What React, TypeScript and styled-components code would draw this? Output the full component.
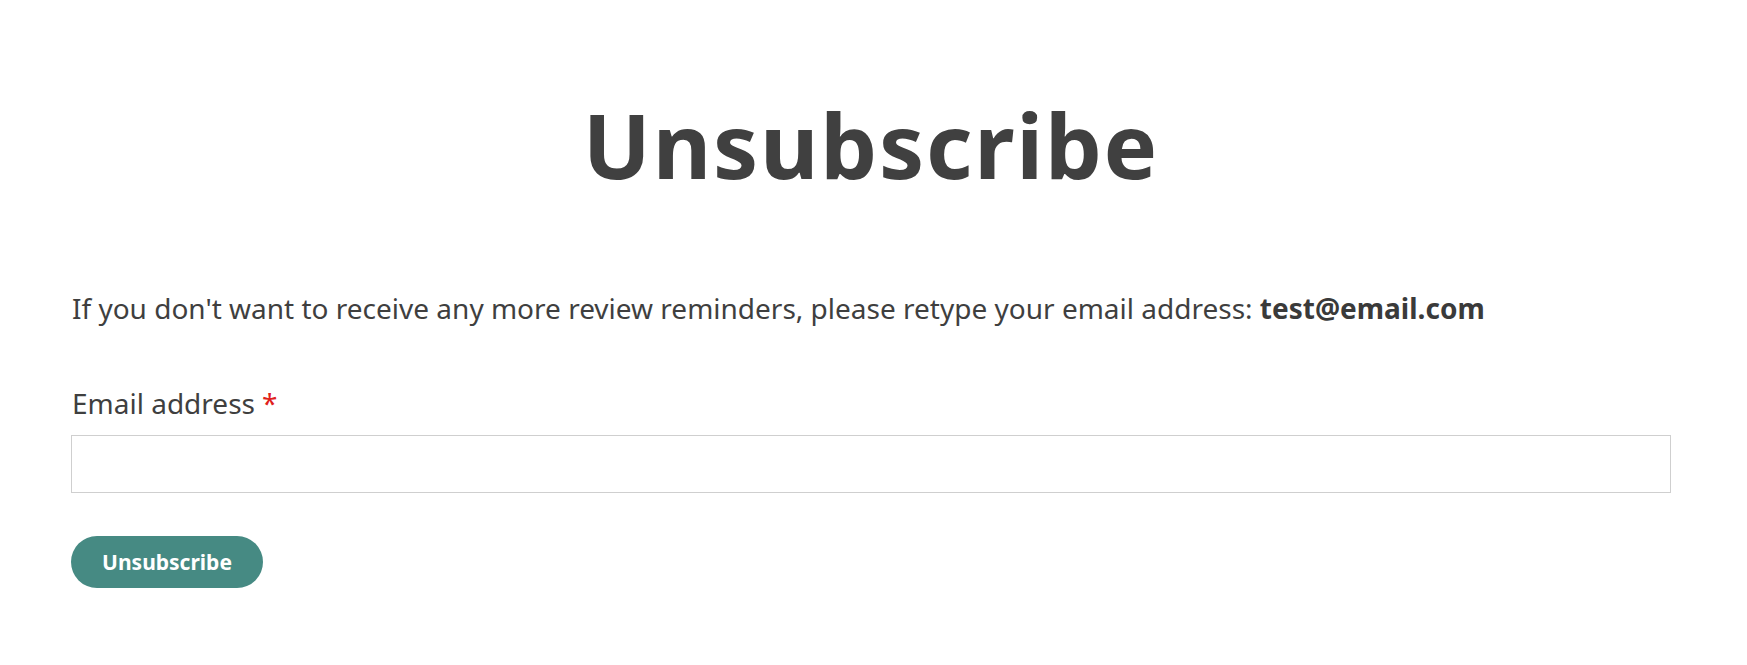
import React from "react";
import styled, { createGlobalStyle } from "styled-components";

const Global = createGlobalStyle`
  html, body {
    margin: 0;
    padding: 0;
    background: #ffffff;
  }
  body {
    font-family: "Noto Sans", "Open Sans", sans-serif;
    color: #3d3d3d;
  }
`;

const Page = styled.main`
  width: 1600px;
  padding: 90px 0 60px 71px;
  display: flex;
  flex-direction: column;
`;

const Title = styled.h1`
  margin: 0;
  font-size: 90px;
  line-height: 108px;
  font-weight: 700;
  letter-spacing: 1.8px;
  text-align: center;
  color: #404040;
`;

const Intro = styled.p`
  margin: 91px 0 0 1px;
  font-size: 28px;
  line-height: 38px;
  color: #3f3f3f;
  strong {
    font-weight: 700;
    color: #3a3a3a;
  }
`;

const Form = styled.form`
  margin-top: 57px;
  display: flex;
  flex-direction: column;
  align-items: flex-start;
`;

const Label = styled.label`
  margin-left: 1px;
  font-size: 28px;
  line-height: 38px;
  color: #3f3f3f;
`;

const Required = styled.span`
  color: #e0201b;
  margin-left: 7px;
`;

const Input = styled.input`
  box-sizing: border-box;
  margin-top: 13px;
  width: 100%;
  height: 58px;
  border: 1px solid #cfcfcf;
  border-radius: 0;
  padding: 0 16px;
  font-family: inherit;
  font-size: 22px;
  outline: none;
  background: #fff;
`;

const Button = styled.button`
  margin-top: 43px;
  box-sizing: border-box;
  height: 52px;
  width: 192px;
  border: none;
  border-radius: 26px;
  background: #468a83;
  color: #ffffff;
  font-family: inherit;
  font-size: 21px;
  font-weight: 700;
  cursor: pointer;
`;

export default function App() {
  return (
    <>
      <Global />
      <Page>
        <Title>Unsubscribe</Title>
        <Intro>
          If you don't want to receive any more review reminders, please retype your email address:{" "}
          <strong>test@email.com</strong>
        </Intro>
        <Form onSubmit={(e) => e.preventDefault()}>
          <Label htmlFor="email">
            Email address<Required>*</Required>
          </Label>
          <Input id="email" type="email" />
          <Button type="submit">Unsubscribe</Button>
        </Form>
      </Page>
    </>
  );
}
